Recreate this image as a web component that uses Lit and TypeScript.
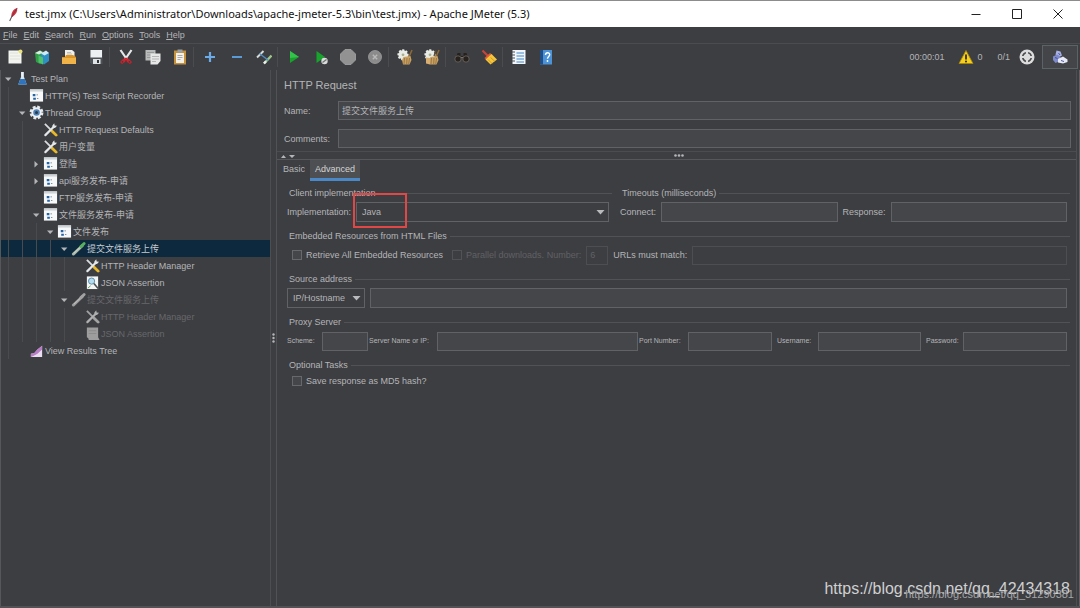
import { LitElement, html, svg, css, nothing } from "lit";
import { customElement, property, state } from "lit/decorators.js";
import { classMap } from "lit/directives/class-map.js";

type IconName = string;

const controller = svg`
  <path d="M1 1.500h14v13H1z" fill="#f6f8f9"/><path d="M1 1.500h14v2.300H1z" fill="#cfd4d9"/>
  <path d="M4 6.500h2.800v2.300H4zM4.500 10.300h2.800v2.300H4.500z" fill="#2463a6"/><path d="M8 7.300h1.500M8.500 11.200h1.500" stroke="#7d8790"/>`;

const tools = (a: string, b: string, c: string) => svg`
  <path d="M2 2l7.500 7.500" stroke="${a}" stroke-width="1.900"/>
  <path d="M9.500 9.500l4.500 4.500" stroke="${b}" stroke-width="3" stroke-linecap="round"/>
  <path d="M2.500 14L11 5.500" stroke="${c}" stroke-width="2.300" stroke-linecap="round"/>
  <path d="M10 3.800l2-2.600.4 2.400 2.600.3-2.200 2.500-2.800-.2z" fill="${c}"/>`;

const pipette = (a: string, b: string) => svg`
  <path d="M2.500 14L12 5" stroke="${a}" stroke-width="3" stroke-linecap="round"/>
  <path d="M3 13.200L10 6.500" stroke="#fff" stroke-width=".8" opacity=".6"/>
  <path d="M10.500 6L14 2.600" stroke="${b}" stroke-width="3" stroke-linecap="round"/>`;

const gearBroom = (extra: boolean) => svg`
  <circle cx="6" cy="5.800" r="4.600" fill="#e9ece6" stroke="#e9ece6" stroke-width="2" stroke-dasharray="2 1.400"/>
  <circle cx="6" cy="5.800" r="1.400" fill="#a9b08f"/>
  <path d="M15 1l-3.500 8" stroke="#8d6a35" stroke-width="1.500"/>
  <path d="M6.500 8l7-1 1 4-2 4.500H6L5 11z" fill="#c9a162"/>
  <path d="M7.500 9l-.5 6M10 9l-.3 6M12.500 9l-.8 6" stroke="#8a6636" stroke-width=".7"/>
  ${extra ? svg`<path d="M12 1.500L10 7" stroke="#5b4a35" stroke-width="1.400"/><path d="M2 8.500l4 .5v6.500l-4-1z" fill="#d8ae72"/>` : nothing}`;

const ICONS: Record<IconName, unknown> = {
  feather: svg`<path d="M13 1c-4 1-6 4-6.500 9l1.300.6C11.500 8 13.500 5 13 1z" fill="#c8373d"/><path d="M13 1c-2 3-4 6-5.800 9.500" stroke="#7a2a55" stroke-width=".8" fill="none"/><path d="M7.300 10L5 15" stroke="#555" stroke-width="1.200"/>`,
  newDoc: svg`<path d="M1.500 1.500h13v13h-13z" fill="#f3f3ef"/><path d="M3 4h8M3 7h10M3 10h10" stroke="#dcdcd6" stroke-width=".8"/><circle cx="13.500" cy="2.500" r="2" fill="#e8e27a"/>`,
  templates: svg`<path d="M1 4l5-2.500L10 3v10l-4 2-4-2z" fill="#2f9d46"/><path d="M1 4l4 1.500 4-2-3-2z" fill="#d7efe0"/><path d="M7 5l5-3 3 2v8l-5 3.500-3-2z" fill="#2e8fc4"/><path d="M7 4.500L12 1.500 15 4l-4.500 2.500z" fill="#cfeaf6"/><path d="M4.500 6.500L9 8.500v7l-4.500-2z" fill="#4fc26a"/>`,
  open: svg`<path d="M4 1h7l2.500 2V9H4z" fill="#f2f0ea"/><path d="M1 8h3l1-2h7l3 2v7H1z" fill="#dc9628"/><path d="M1 9h14v6H1z" fill="#f0b348"/><path d="M6 3.500h4M6 5h5" stroke="#aaa" stroke-width=".7"/>`,
  save: svg`<path d="M2 1h12.500v14H3.500L2 13.500z" fill="#4c5257"/><path d="M2.500 1h11.500v7.500H2.500z" fill="#eef1f3"/><path d="M5 10h7.500v5H5z" fill="#dfe3e6"/><path d="M9 11h2v3H9z" fill="#32373b"/>`,
  cut: svg`<path d="M2.500 1L9 10.500M13.500 1L7 10.500" stroke="#e6e8ea" stroke-width="2.200"/><path d="M8 8.500L4.500 10.500l-2.500 2.500 2 2L7 13l1-2.500L9 13l3 2 2-2-2.500-2.500z" fill="#d3212b"/><circle cx="4.500" cy="12.800" r=".9" fill="#3d3e42"/><circle cx="11.500" cy="12.800" r=".9" fill="#3d3e42"/>`,
  copy: svg`<path d="M.5 1h10v10.500H.5z" fill="#b9bbbb"/><path d="M2 3.500h7M2 6h7M2 8.500h4" stroke="#8d9090" stroke-width=".8"/><path d="M5.500 4.500h10V12L12.500 15.500h-7z" fill="#e6e7e6"/><path d="M7 7.500h7M7 10h7M7 12.500h4" stroke="#a7aaaa" stroke-width=".8"/>`,
  paste: svg`<path d="M2 1.500h12v14H2z" fill="#c4913c"/><path d="M4 4h8v10H4z" fill="#f3f1ea"/><path d="M5.500.5h5v3h-5z" fill="#9aa0a3"/><path d="M5.500 6.500h5M5.500 8.500h5M5.500 10.500h3" stroke="#999" stroke-width=".8"/>`,
  plus: svg`<path d="M8 3v10M3 8h10" stroke="#6aabe8" stroke-width="2.200"/>`,
  minus: svg`<path d="M3 8h10" stroke="#5b9bd5" stroke-width="2"/>`,
  toggle: svg`<path d="M1 8.500L7.500 2" stroke="#d7dbd9" stroke-width="1.900"/><path d="M8 14.500L15.500 6.500" stroke="#9fc68d" stroke-width="2.300"/><path d="M3.500 4.500l9 7" stroke="#4f8fc4" stroke-width="1.300"/><path d="M8 14.500l2-2.200" stroke="#eee" stroke-width="2.300"/>`,
  start: svg`<path d="M4 2L13 8l-9 6z" fill="#17a32c"/><path d="M4 2L13 8l-9 1z" fill="#34c34a"/>`,
  startNoPause: svg`<path d="M3.500 2L12 8l-8.500 6z" fill="#17a32c"/><circle cx="11.500" cy="12" r="3.200" fill="#d9dcda"/><path d="M9.500 13.500l4-3" stroke="#6b706d" stroke-width="1.200"/>`,
  stop: svg`<path d="M5 .5h6L15.500 5v6L11 15.500H5L.5 11V5z" fill="#929292" stroke="#a5a5a5" stroke-width=".8"/>`,
  shutdown: svg`<circle cx="8" cy="8" r="6.500" fill="#8b8b8b" stroke="#9d9d9d" stroke-width=".8"/><path d="M5.800 5.800l4.400 4.400M10.200 5.800l-4.400 4.400" stroke="#b9b9b9" stroke-width="1.400"/>`,
  clear: gearBroom(false),
  clearAll: gearBroom(true),
  search: svg`<path d="M3.500 4h3v3h3V4h3l1.500 5H2z" fill="#26211d"/><circle cx="4" cy="10" r="3.200" fill="#26211d" stroke="#6b645f" stroke-width=".9"/><circle cx="12" cy="10" r="3.200" fill="#26211d" stroke="#6b645f" stroke-width=".9"/><path d="M7 8.500h2" stroke="#77706a"/>`,
  broom: svg`<path d="M1.500 1.500L7 7" stroke="#c6453a" stroke-width="2.200"/><path d="M3.500 9L9 4l2.500 2-6 5.500z" fill="#dd5a3c"/><path d="M4.500 10.500L10.500 5l5.500 5.500-6.500 5z" fill="#f5c53c"/><path d="M7 10.500l4 4M9.500 8.500l4.500 4" stroke="#c98f1a" stroke-width=".8"/>`,
  functions: svg`<path d="M1.500 1h13v14h-13z" fill="#f2f6fa"/><path d="M5.500 4h7.500M5.500 7h7.500M5.500 10h7.500M5.500 13h7.500" stroke="#3f87c9" stroke-width="1.100"/><path d="M1 3h3M1 6h3M1 9h3M1 12h3" stroke="#4b5056" stroke-width="1"/>`,
  help: svg`<path d="M2 1h12v14.500H2z" fill="#4b93d6"/><path d="M2 1h3v14.500H2z" fill="#1f4f86"/><path d="M7.500 6c0-3 4.300-2.800 4.200-.3C11.600 7.500 9.500 7.500 9.500 9.800" stroke="#fff" stroke-width="1.400" fill="none"/><circle cx="9.500" cy="12" r=".9" fill="#fff"/>`,
  warning: svg`<path d="M8 1.500L15 14.500H1z" fill="#f6cf1c" stroke="#a8860c" stroke-width=".8"/><path d="M8 5.500v5" stroke="#2b2410" stroke-width="1.700"/><circle cx="8" cy="12.500" r="1" fill="#2b2410"/>`,
  target: svg`<circle cx="8" cy="8" r="7.500" fill="#dcdcdc"/><circle cx="8" cy="8" r="4.300" fill="none" stroke="#4a4b4d" stroke-width="1.700"/><path d="M8 2v12M2 8h12" stroke="#dcdcdc" stroke-width="2.200"/>`,
  remote: svg`<path d="M4.500 1.500l4 1 1.500 4-4.500 2-2-3z" fill="#a8b1e4"/><path d="M1 7.500l4-2 3.500 2V12l-5 2L1 11z" fill="#7f8acb"/><path d="M6 10l5-2.500 4.500 3V13L11 14.500l-5-1z" fill="#e8eaf8"/><path d="M3 8.500l2.500 1M6.500 4l1.500 2M9 11.500l3 1" stroke="#3f4a92" stroke-width=".9"/>`,
  plan: svg`<path d="M6.500 1h3v5l3 8.500h-9l3-8.500z" fill="#d9e6f1"/><path d="M5.500 8.500h5l2 6h-9z" fill="#2f74bd"/><path d="M7.500 1v5" stroke="#fff"/>`,
  controller,
  threads: svg`<circle cx="8" cy="8" r="5.600" fill="none" stroke="#e3e8ec" stroke-width="3.600" stroke-dasharray="2.800 1.600"/><circle cx="8" cy="8" r="4.500" fill="#4d83b8" stroke="#eef1f3" stroke-width="2"/><circle cx="8" cy="8" r="1.600" fill="#2a3947"/>`,
  tools: tools("#d9dcde", "#e7b92a", "#e4e7e9"),
  toolsOff: tools("#a3a3a3", "#a3a3a3", "#b0b0b0"),
  sampler: pipette("#a9b7a6", "#57b05c"),
  samplerOff: pipette("#9a9a9a", "#a2a2a2"),
  assertion: svg`<path d="M2 1.500h12v13.500H2z" fill="#f4f5f5"/><circle cx="7" cy="6.500" r="3.300" fill="#b4dbee" stroke="#5d8ba6"/><path d="M9.500 9l4.500 5.500" stroke="#4b5054" stroke-width="1.700"/><path d="M3 14l3-2.500" stroke="#59a05a"/>`,
  assertionOff: svg`<path d="M2 1.500h12v10.500l1.500 3H4l-.5-2L2 12z" fill="#9d9d9d"/><path d="M4 5h8M4 8h8" stroke="#8b8b8b"/>`,
  results: svg`<path d="M14 3v12H2v-3.500l3.500-.5L9 7z" fill="#ecdcf1"/><path d="M2 15v-3.500L5.500 11 9 7l5-4v4l-5 4.500-4 2z" fill="#b97cc6"/>`,
};

@customElement("jm-icon")
class JmIcon extends LitElement {
  @property() name: IconName = "newDoc";
  static styles = css`
    :host { display: block; width: 16px; height: 16px; flex: none; }
    .glyph { display: block; width: 100%; height: 100%; }
  `;
  render() {
    return html`<svg class="glyph" viewBox="0 0 16 16" fill="none" aria-hidden="true">${ICONS[this.name]}</svg>`;
  }
}

interface TreeNode {
  level: number;
  icon: IconName;
  text: string;
  open?: boolean;
  off?: boolean;
}

const TREE: TreeNode[] = [
  { level: 0, icon: "plan", text: "Test Plan", open: true },
  { level: 1, icon: "controller", text: "HTTP(S) Test Script Recorder" },
  { level: 1, icon: "threads", text: "Thread Group", open: true },
  { level: 2, icon: "tools", text: "HTTP Request Defaults" },
  { level: 2, icon: "tools", text: "用户变量" },
  { level: 2, icon: "controller", text: "登陆", open: false },
  { level: 2, icon: "controller", text: "api服务发布-申请", open: false },
  { level: 2, icon: "controller", text: "FTP服务发布-申请" },
  { level: 2, icon: "controller", text: "文件服务发布-申请", open: true },
  { level: 3, icon: "controller", text: "文件发布", open: true },
  { level: 4, icon: "sampler", text: "提交文件服务上传", open: true },
  { level: 5, icon: "tools", text: "HTTP Header Manager" },
  { level: 5, icon: "assertion", text: "JSON Assertion" },
  { level: 4, icon: "samplerOff", text: "提交文件服务上传", open: true, off: true },
  { level: 5, icon: "toolsOff", text: "HTTP Header Manager", off: true },
  { level: 5, icon: "assertionOff", text: "JSON Assertion", off: true },
  { level: 1, icon: "results", text: "View Results Tree" },
];

@customElement("jm-tree")
class JmTree extends LitElement {
  @state() private selected = 10;
  static styles = css`
    :host { display: block; border-left: 1px solid #55575b; margin-right: -1px; }
    .row {
      display: flex; align-items: center; width: 100%; height: 17px; padding: 0;
      border: 0; background: none; color: #b4b5b7; font: inherit; text-align: left; white-space: nowrap;
    }
    .row.selected { background: #0d293e; color: #c6cbd0; }
    .row.off { color: #67686b; }
    .guide { width: 14px; height: 17px; flex: none; display: flex; justify-content: center; }
    .guide.line::before { content: ""; width: 1px; background: #494b4f; }
    .arrow { width: 8px; height: 8px; fill: #b4b5b7; align-self: center; }
    .pic { width: 15px; height: 15px; margin-right: 1px; }
  `;
  render() {
    return TREE.map((n, i) => html`
      <button
        class=${classMap({ row: true, selected: i === this.selected, off: !!n.off })}
        @click=${() => (this.selected = i)}
      >
        ${Array.from({ length: n.level }, () => html`<span class=${classMap({ guide: true, line: true })}></span>`)}
        <span class="guide">
          ${n.open === undefined
            ? nothing
            : html`<svg class="arrow" viewBox="0 0 8 8"><path d=${n.open ? "M1 2.500h6.400L4.200 6z" : "M2.500 1v6.400L6 4.200z"} /></svg>`}
        </span>
        <jm-icon class="pic" name=${n.icon}></jm-icon>
        <span>${n.text}</span>
      </button>
    `);
  }
}

const TOOLBAR: IconName[][] = [
  ["newDoc", "templates", "open", "save"],
  ["cut", "copy", "paste"],
  ["plus", "minus", "toggle"],
  ["start", "startNoPause", "stop", "shutdown"],
  ["clear", "clearAll"],
  ["search", "broom"],
  ["functions", "help"],
];

@customElement("jm-request")
class JmRequest extends LitElement {
  @state() private tab = "Advanced";
  static styles = css`
    :host { display: block; min-width: 0; }
    * { box-sizing: border-box; }
    input, select, button { font: inherit; color: inherit; margin: 0; }
    label { white-space: nowrap; }
    .title { margin: 0; padding: 8px 7px 0; font-size: 11px; line-height: 15px; font-weight: 400; }
    .form { display: grid; grid-template-columns: 54px minmax(0, 1fr); row-gap: 9px; align-items: center; padding: 8px 5px 3px 7px; }
    .text {
      width: 100%; min-width: 0; height: 19px; padding: 0 3px; border: 1px solid #606266;
      background: #45464a; outline: none; border-radius: 0;
    }
    .tall { height: 20px; }
    .text:disabled { background: none; border-color: #4c4e52; color: #606164; }
    .splitter {
      display: grid; grid-template-columns: 1fr auto 1fr; align-items: center; height: 9px; padding-left: 4px;
      border-top: 1px solid #4a4c50; border-bottom: 1px solid #55575b;
    }
    .nudge { display: block; width: 16px; height: 6px; fill: #b4b5b7; }
    .grip { display: block; width: 10px; height: 3px; fill: #b4b5b7; }
    .tabs { display: flex; height: 21px; padding-left: 1px; }
    .tab { border: 0; border-bottom: 3px solid transparent; background: none; padding: 0 5px; }
    .tab.on { background: #4d4f52; border-color: #4a88c7; color: #d4d5d6; }
    .groups { display: flex; flex-direction: column; gap: 8px; padding: 6px 6px 0 7px; }
    .pair { display: grid; grid-template-columns: minmax(0, 42fr) minmax(0, 58fr); gap: 5px; }
    .group { margin: 0; padding: 0; border: 0; min-width: 0; }
    .legend { display: flex; align-items: center; gap: 3px; height: 12px; margin-bottom: 3px; padding-left: 5px; white-space: nowrap; }
    .legend::after { content: ""; flex: 1; height: 1px; background: #505256; }
    .line { display: flex; align-items: center; height: 20px; padding: 0 3px; gap: 5px; }
    .shift { padding-left: 8px; }
    .short { height: 14px; }
    .pick { position: relative; display: flex; flex: 1; min-width: 0; }
    .pick.small { flex: none; width: 78px; }
    .select {
      width: 100%; height: 20px; appearance: none; border: 1px solid #606266; border-radius: 0;
      background: #3d3e42; padding: 0 18px 0 5px; outline: none;
    }
    .caret { position: absolute; right: 4px; top: 6px; width: 9px; height: 8px; fill: #b9babc; pointer-events: none; }
    .mark { position: absolute; left: -3px; top: -9px; width: 54px; height: 35px; border: 2px solid #e04848; pointer-events: none; }
    .box {
      appearance: none; width: 10px; height: 10px; flex: none; border: 1px solid #66686c; background: #45464a;
    }
    .box:disabled { background: none; border-color: #505256; }
    .check { display: flex; align-items: center; gap: 4px; }
    .check.off { color: #606164; margin-left: 4px; }
    .count { width: 22px; flex: none; }
    .proxy {
      display: grid; align-items: center; height: 20px; padding: 0 3px; font-size: 7px;
      grid-template-columns: 35px 46fr 69px 201fr 50px 84fr 46px 103fr 42px 104fr;
    }
    .near { padding-left: 1px; }
    .far { padding-left: 5px; }
    .fill { flex: 1; }
  `;
  render() {
    return html`
      <h1 class="title">HTTP Request</h1>
      <div class="form">
        <label for="name">Name:</label>
        <input class="text" id="name" .value=${"提交文件服务上传"} />
        <label for="comments">Comments:</label>
        <input class="text" id="comments" />
      </div>
      <div class="splitter">
        <svg class="nudge" viewBox="0 0 16 6"><path d="M0 5h5L2.500 2zM8 2h6l-3 3z" /></svg>
        <svg class="grip" viewBox="0 0 10 3"><circle cx="1.500" cy="1.500" r="1.300" /><circle cx="5" cy="1.500" r="1.300" /><circle cx="8.500" cy="1.500" r="1.300" /></svg>
      </div>
      <div class="tabs" role="tablist">
        ${["Basic", "Advanced"].map((t) => html`
          <button role="tab" class=${classMap({ tab: true, on: t === this.tab })} @click=${() => (this.tab = t)}>${t}</button>
        `)}
      </div>
      <div class="groups">
        <div class="pair">
          <section class="group">
            <div class="legend">Client implementation</div>
            <div class="line">
              <label for="impl">Implementation:</label>
              <div class="pick">
                <select class="select" id="impl"><option>Java</option><option>HttpClient4</option></select>
                <svg class="caret" viewBox="0 0 9 8"><path d="M.5 2h8L4.500 6.500z" /></svg>
                <span class="mark"></span>
              </div>
            </div>
          </section>
          <section class="group">
            <div class="legend">Timeouts (milliseconds)</div>
            <div class="line">
              <label for="connect">Connect:</label>
              <input class="text tall fill" id="connect" />
              <label for="response">Response:</label>
              <input class="text tall fill" id="response" />
            </div>
          </section>
        </div>
        <section class="group">
          <div class="legend">Embedded Resources from HTML Files</div>
          <div class="line shift">
            <label class="check"><input class="box" type="checkbox" />Retrieve All Embedded Resources</label>
            <label class="check off"><input class="box" type="checkbox" disabled />Parallel downloads. Number:</label>
            <input class="text count" aria-label="Number of parallel downloads" .value=${"6"} disabled />
            <label for="match">URLs must match:</label>
            <input class="text fill" id="match" disabled />
          </div>
        </section>
        <section class="group">
          <div class="legend">Source address</div>
          <div class="line">
            <div class="pick small">
              <select class="select" aria-label="Source address type"><option>IP/Hostname</option><option>Device</option></select>
              <svg class="caret" viewBox="0 0 9 8"><path d="M.5 2h8L4.500 6.500z" /></svg>
            </div>
            <input class="text tall fill" aria-label="Source address" />
          </div>
        </section>
        <section class="group">
          <div class="legend">Proxy Server</div>
          <div class="proxy">
            <label for="scheme">Scheme:</label><input class="text" id="scheme" />
            <label class="near" for="server">Server Name or IP:</label><input class="text" id="server" />
            <label class="near" for="port">Port Number:</label><input class="text" id="port" />
            <label class="far" for="user">Username:</label><input class="text" id="user" />
            <label class="far" for="pass">Password:</label><input class="text" id="pass" type="password" />
          </div>
        </section>
        <section class="group">
          <div class="legend">Optional Tasks</div>
          <div class="line shift short">
            <label class="check"><input class="box" type="checkbox" />Save response as MD5 hash?</label>
          </div>
        </section>
      </div>
    `;
  }
}

@customElement("app-root")
class AppRoot extends LitElement {
  static styles = css`
    :host {
      display: flex; flex-direction: column; position: relative; height: 100vh; box-sizing: border-box; overflow: hidden;
      background: #3d3e42; color: #b4b5b7; font: 9px/12px "Liberation Sans", "Noto Sans CJK SC", sans-serif;
    }
    * { box-sizing: border-box; }
    button { font: inherit; color: inherit; }
    .titlebar {
      display: flex; align-items: center; height: 27px; flex: none; background: #fff; color: #111;
      border-top: 1px solid #8c8c8c; padding-left: 5px;
      font: 11px/16px "Noto Sans", "Open Sans", sans-serif;
    }
    .logo { width: 15px; height: 15px; margin-right: 5px; }
    .caption { flex: 1; white-space: nowrap; }
    .win { width: 41px; height: 26px; border: 0; background: none; padding: 0; display: grid; place-items: center; }
    .sign { width: 10px; height: 10px; stroke: #222; fill: none; }
    .ends { display: flex; padding-right: 2px; }
    .menu { display: flex; gap: 6px; height: 16px; flex: none; padding-left: 3px; align-items: center; }
    .item { border: 0; background: none; padding: 0; }
    .key { text-decoration: underline; }
    .toolbar {
      display: flex; align-items: center; height: 27px; flex: none; border-top: 1px solid #4a4c50; padding: 0 2px 0 1px;
    }
    .tool { width: 27px; height: 24px; border: 0; background: none; padding: 0; display: grid; place-items: center; }
    .sep { width: 3px; height: 20px; border-left: 1px solid #4a4c50; }
    .spacer { flex: 1; }
    .status { display: flex; align-items: center; gap: 3px; }
    .clock { margin-right: 11px; }
    .ratio { margin: 0 6px 0 12px; }
    .remote { width: 36px; height: 24px; border: 1px solid #5a6466; background: #434548; padding: 0; display: grid; place-items: center; margin-left: 7px; }
    .main { flex: 1; min-height: 0; display: grid; grid-template-columns: 25% 7px minmax(0, 1fr) 4px; border-bottom: 2px solid #505256; }
    .divider { display: grid; place-items: center; border-left: 1px solid #4c4e52; border-right: 1px solid #505256; }
    .dots { width: 3px; height: 10px; fill: #b4b5b7; }
    .edge { border-left: 1px solid #4c4e52; border-right: 1px solid #606266; }
    .stamp { position: absolute; right: 10px; bottom: 8px; font-size: 16px; line-height: 22px; color: #cfd0d1; }
    .stamp.minor { right: 6px; bottom: 7px; font-size: 11px; line-height: 14px; color: #a5a6a8; }
  `;
  render() {
    return html`
      <header class="titlebar">
        <jm-icon class="logo" name="feather"></jm-icon>
        <span class="caption">test.jmx (C:\\Users\\Administrator\\Downloads\\apache-jmeter-5.3\\bin\\test.jmx) - Apache JMeter (5.3)</span>
        <div class="ends">
          <button class="win" aria-label="Minimize"><svg class="sign" viewBox="0 0 10 10"><path d="M.5 5.500h9" /></svg></button>
          <button class="win" aria-label="Maximize"><svg class="sign" viewBox="0 0 10 10"><path d="M.5.5h9v9h-9z" /></svg></button>
          <button class="win" aria-label="Close"><svg class="sign" viewBox="0 0 10 10"><path d="M.5.5l9 9M9.500.5l-9 9" /></svg></button>
        </div>
      </header>
      <nav class="menu">
        ${["File", "Edit", "Search", "Run", "Options", "Tools", "Help"].map(
          (m) => html`<button class="item"><span class="key">${m[0]}</span>${m.slice(1)}</button>`
        )}
      </nav>
      <div class="toolbar">
        ${TOOLBAR.map((group, i) => html`
          ${i ? html`<span class="sep"></span>` : nothing}
          ${group.map((n) => html`<button class="tool" aria-label=${n}><jm-icon name=${n}></jm-icon></button>`)}
        `)}
        <span class="spacer"></span>
        <div class="status">
          <span class="clock">00:00:01</span>
          <jm-icon name="warning"></jm-icon><span>0</span>
          <span class="ratio">0/1</span>
          <jm-icon name="target"></jm-icon>
        </div>
        <button class="remote" aria-label="Remote status"><jm-icon name="remote"></jm-icon></button>
      </div>
      <main class="main">
        <jm-tree></jm-tree>
        <div class="divider">
          <svg class="dots" viewBox="0 0 3 10"><circle cx="1.500" cy="1.500" r="1.200" /><circle cx="1.500" cy="5" r="1.200" /><circle cx="1.500" cy="8.500" r="1.200" /></svg>
        </div>
        <jm-request></jm-request>
        <div class="edge"></div>
      </main>
      <span class="stamp">https://blog.csdn.net/qq_42434318</span>
      <span class="stamp minor">https://blog.csdn.net/qq_31290381</span>
    `;
  }
}
